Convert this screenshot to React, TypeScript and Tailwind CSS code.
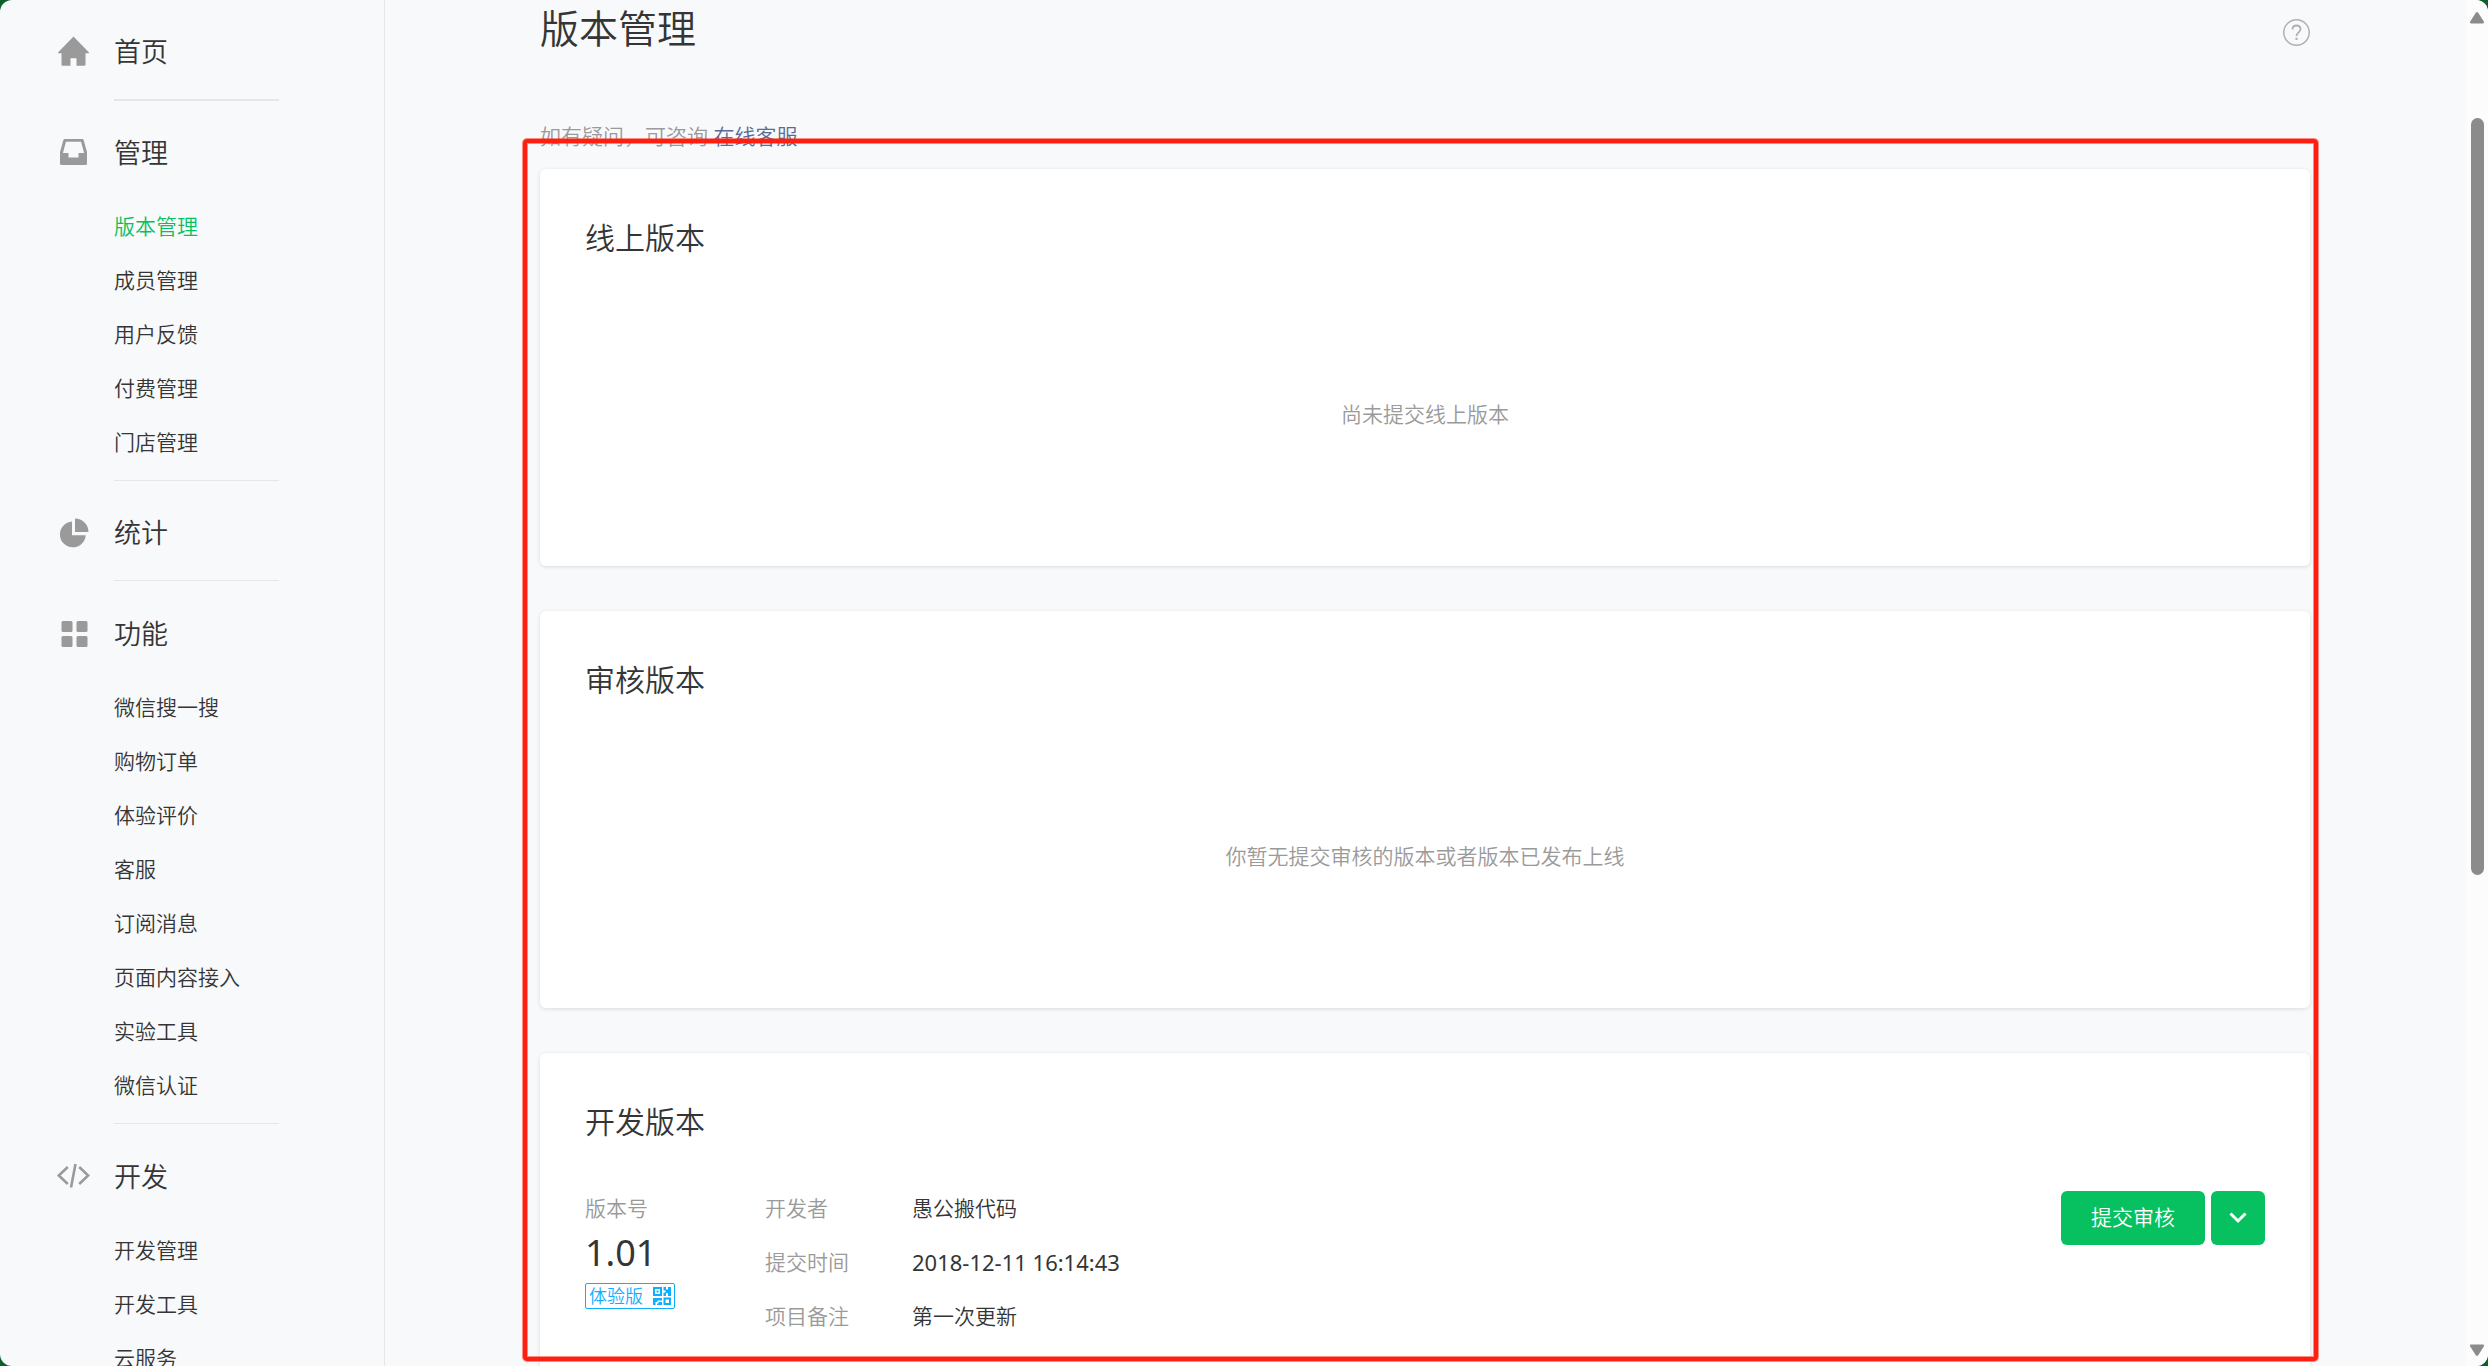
import { useState } from "react";

const navGroups = [
  { title: "首页", icon: "home", items: [] },
  { title: "管理", icon: "inbox", items: ["版本管理", "成员管理", "用户反馈", "付费管理", "门店管理"] },
  { title: "统计", icon: "chart", items: [] },
  {
    title: "功能",
    icon: "grid",
    items: ["微信搜一搜", "购物订单", "体验评价", "客服", "订阅消息", "页面内容接入", "实验工具", "微信认证"],
  },
  { title: "开发", icon: "code", items: ["开发管理", "开发工具", "云服务"] },
];

const devInfo = [
  { label: "开发者", value: "愚公搬代码" },
  { label: "提交时间", value: "2018-12-11 16:14:43" },
  { label: "项目备注", value: "第一次更新" },
];

function NavIcon({ name }: { name: string }) {
  return (
    <svg viewBox="0 0 34 34" className="size-[34px] shrink-0 fill-[#9a9a9a]" aria-hidden="true">
      {name === "home" && (
        <path d="M17.500 1.500 32.800 17.200c.4.5.2 1.100-.5 1.100H29.500v11.300c0 .8-.5 1.200-1.200 1.200H20.500v-7.500h-6v7.500H6.700c-.8 0-1.200-.4-1.200-1.200V18.300H2.700c-.7 0-.9-.6-.5-1.100z" />
      )}
      {name === "inbox" && (
        <path
          fillRule="evenodd"
          d="M9 3h17c.9 0 1.500.5 1.700 1.300L31 16v11.500c0 .9-.6 1.500-1.500 1.500h-24c-.9 0-1.500-.6-1.500-1.500V16L7.300 4.300C7.500 3.500 8.100 3 9 3zm1 2.800L6.900 17h5.600v4.500h10V17h5.600L25 5.800z"
        />
      )}
      {name === "chart" && (
        <path d="M16 5.500v13.700h13.700A12.900 12.900 0 1 1 16 5.500zM19 2.500A13.500 13.500 0 0 1 32.500 16H19z" />
      )}
      {name === "grid" && (
        <>
          <rect x="5.500" y="4" width="11" height="11" rx="1.500" />
          <rect x="20.500" y="4" width="11" height="11" rx="1.500" />
          <rect x="5.500" y="19" width="11" height="11" rx="1.500" />
          <rect x="20.500" y="19" width="11" height="11" rx="1.500" />
        </>
      )}
      {name === "code" && (
        <path
          fill="none"
          stroke="#9a9a9a"
          strokeWidth="2.600"
          d="M11.800 7 2.800 15.500l9 8.500M23.200 7l9 8.500-9 8.500M19.500 4l-4.500 23.500"
        />
      )}
    </svg>
  );
}

function QrIcon() {
  return (
    <svg viewBox="0 0 18 18" className="size-[18px] fill-[#10aeff]" aria-hidden="true">
      <path
        fillRule="evenodd"
        d="M0 0h9v9H0zM2 2v5h5V2zM3.500 3.500h2v2h-2zM10.500 0h2.500v2.500h2V0H18v9h-3V6h-2v3h-2.500V5h-0zM10.500 3.500h2v2h-2zM0 11h9v2.500H4.500V15H2.500v3H0zM5.500 15H9v3H4v-1.500h1.500zM10.500 10.500H18V18h-7.500zM12.500 12.500V16H16v-3.500z"
      />
    </svg>
  );
}

function Sidebar({ active, onSelect }: { active: string; onSelect: (v: string) => void }) {
  return (
    <nav className="w-[385px] shrink-0 overflow-hidden border-r border-[#e4e6e9] text-[#353535]">
      {navGroups.map((group, i) => (
        <section key={group.title}>
          <a href="#" className="mt-[3px] flex h-24 items-center gap-6 pt-0.5 pl-14">
            <NavIcon name={group.icon} />
            <span className="text-[27px] leading-9">{group.title}</span>
          </a>
          {group.items.length > 0 && (
            <ul className="pb-2.5 pl-[114px]">
              {group.items.map((item) => (
                <li key={item}>
                  <a
                    href="#"
                    onClick={() => onSelect(item)}
                    className={`flex h-[54px] items-center text-[21px] ${item === active ? "text-[#07c160]" : ""}`}
                  >
                    {item}
                  </a>
                </li>
              ))}
            </ul>
          )}
          <div className={`ml-[114px] w-[165px] bg-[#e4e6e9] ${i === 0 ? "h-0.5" : "h-px"} ${i > 1 ? "mb-1" : ""}`} />
        </section>
      ))}
    </nav>
  );
}

function VersionCard({ title, children }: { title: string; children: React.ReactNode }) {
  return (
    <section className="flex min-h-[397px] shrink-0 flex-col rounded-md bg-white px-[45px] pt-[46px] shadow-[0_1px_4px_rgba(0,0,0,0.12)]">
      <h2 className="text-[30px] leading-[45px]">{title}</h2>
      {children}
    </section>
  );
}

function EmptyTip({ text }: { text: string }) {
  return <p className="mt-1 flex h-[302px] items-center justify-center text-[21px] text-[#9a9a9a]">{text}</p>;
}

function Scrollbar() {
  return (
    <div className="flex w-[22px] shrink-0 flex-col items-center bg-[#fcfcfc] pt-3 pb-2.5" aria-hidden="true">
      <svg viewBox="0 0 16 12" className="h-3 w-4 shrink-0 fill-[#8b8b8b]">
        <path d="M6.800.8a1.500 1.500 0 0 1 2.400 0l5.600 8.700c.6 1 .1 2-1 2H2.200c-1.100 0-1.600-1-1-2z" />
      </svg>
      <div className="flex-[94]" />
      <div className="w-[13px] flex-[757] rounded-full bg-[#8b8b8b]" />
      <div className="flex-[469]" />
      <svg viewBox="0 0 16 12" className="h-3 w-4 shrink-0 rotate-180 fill-[#8b8b8b]">
        <path d="M6.800.8a1.500 1.500 0 0 1 2.400 0l5.600 8.700c.6 1 .1 2-1 2H2.200c-1.100 0-1.600-1-1-2z" />
      </svg>
    </div>
  );
}

export default function App() {
  const [active, setActive] = useState("版本管理");

  return (
    <div className="h-screen bg-[#0f5f2c] font-['Noto_Sans','Noto_Sans_CJK_SC',sans-serif] font-[350]">
      <div className="flex h-full overflow-hidden rounded-xl bg-[#f8f9fb]">
        <Sidebar active={active} onSelect={setActive} />

        <main className="flex min-w-0 flex-1 flex-col pr-[156px] pl-[155px] text-[#353535]">
          {/* title */}
          <header className="flex h-16 items-center justify-between">
            <h1 className="pb-2 text-[39px] leading-[56px]">版本管理</h1>
            <button type="button" aria-label="帮助">
              <svg viewBox="0 0 27 27" className="size-[27px] fill-none stroke-[#b0b0b0]" aria-hidden="true">
                <circle cx="13.500" cy="13.500" r="12.700" strokeWidth="1.500" />
                <path d="M9.500 10.500c0-2.500 1.600-4 4-4s4 1.500 4 3.700c0 3-4 3.300-4 6.800" strokeWidth="1.800" />
                <path d="M13.500 18.800v2.200" strokeWidth="2" />
              </svg>
            </button>
          </header>

          <p className="mt-[57px] h-12 text-[21px] leading-[30px] text-[#9a9a9a]">
            如有疑问，可咨询 <a href="#" className="text-[#576b95]">在线客服</a>
          </p>

          {/* version cards */}
          <div className="relative flex min-h-0 flex-1 flex-col gap-[45px]">
            <VersionCard title="线上版本">
              <EmptyTip text="尚未提交线上版本" />
            </VersionCard>
            <VersionCard title="审核版本">
              <EmptyTip text="你暂无提交审核的版本或者版本已发布上线" />
            </VersionCard>
            <VersionCard title="开发版本">
              <div className="mt-[37px] flex items-start">
                <div className="w-[180px]">
                  <p className="text-[21px] leading-[54px] text-[#9a9a9a]">版本号</p>
                  <p className="text-4xl leading-9 font-normal">1.01</p>
                  <a
                    href="#"
                    className="mt-3 inline-flex h-[26px] items-center gap-2.5 rounded-xs border border-[#10aeff] px-[3px] text-lg text-[#10aeff]"
                  >
                    体验版
                    <QrIcon />
                  </a>
                </div>
                <dl className="grid grid-cols-[147px_auto] leading-[54px]">
                  {devInfo.map((row) => (
                    <div key={row.label} className="contents">
                      <dt className="text-[21px] text-[#9a9a9a]">{row.label}</dt>
                      <dd className={row.label === "提交时间" ? "text-[22px] font-normal" : "text-[21px]"}>{row.value}</dd>
                    </div>
                  ))}
                </dl>
                <div className="mt-2.5 ml-auto flex gap-1.5 text-white">
                  <button type="button" className="h-[54px] w-36 rounded-md bg-[#07c160] text-[21px]">
                    提交审核
                  </button>
                  <button
                    type="button"
                    aria-label="更多操作"
                    className="flex size-[54px] items-center justify-center rounded-md bg-[#07c160]"
                  >
                    <svg viewBox="0 0 18 12" className="h-3 w-[18px] fill-none stroke-white stroke-3" aria-hidden="true">
                      <path d="M1.500 1.500 9 9l7.500-7.500" />
                    </svg>
                  </button>
                </div>
              </div>
            </VersionCard>

            {/* highlight frame */}
            <div className="pointer-events-none absolute -top-[30px] -right-[8px] bottom-[5px] -left-[17px] rounded-sm border-4 border-[#ff1f10] shadow-[0_0_0_1px_rgba(255,31,16,0.5),inset_0_0_0_1px_rgba(255,31,16,0.5)]" />
          </div>
        </main>

        <Scrollbar />
      </div>
    </div>
  );
}
